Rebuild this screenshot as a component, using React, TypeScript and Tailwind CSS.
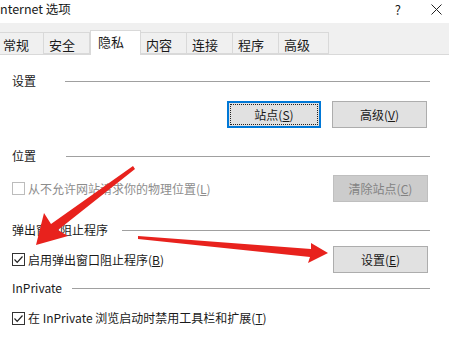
import type { ReactNode } from 'react';

const font = { fontFamily: '"Noto Sans CJK SC", "Noto Sans", sans-serif' };

function Tab({ label, active, w }: { label: string; active?: boolean; w: string }) {
  if (active) {
    return (
      <div className={`relative z-10 -mb-px flex h-[25px] ${w} items-start self-end border border-b-0 border-[#d9d9d9] bg-white pl-[7px] pt-[1px]`}>
        {label}
      </div>
    );
  }
  return (
    <div className={`flex h-[22px] ${w} items-start self-end border border-l-0 border-[#d9d9d9] bg-[#f0f0f0] pl-[5px] pt-[2px]`}>
      {label}
    </div>
  );
}

function GroupTitle({ label, gap, top }: { label: string; gap: number; top: string }) {
  return (
    <div className={`flex items-center ${top}`}>
      <span className="leading-4">{label}</span>
      <div className="h-px flex-1 bg-[#a0a0a0]" style={{ marginLeft: gap }} />
    </div>
  );
}

function Check({ checked, disabled }: { checked?: boolean; disabled?: boolean }) {
  return (
    <span
      className={`flex h-[13px] w-[13px] shrink-0 items-center justify-center border bg-white ${
        disabled ? 'border-[#bcbcbc]' : 'border-[#333]'
      }`}
    >
      {checked && (
        <svg width="11" height="11" viewBox="0 0 11 11">
          <path d="M1.5 5.5 L4.2 8.3 L9.5 2.5" fill="none" stroke="#222" strokeWidth="1.2" />
        </svg>
      )}
    </span>
  );
}

function Btn({
  children,
  focused,
  disabled,
  w = 'w-[95px]',
}: {
  children: ReactNode;
  focused?: boolean;
  disabled?: boolean;
  w?: string;
}) {
  if (focused) {
    return (
      <div className={`flex h-[27px] ${w} items-center justify-center border-2 border-[#0078d7] bg-[#e1e1e1] p-px`}>
        <div className="flex h-full w-full items-center justify-center border border-dotted border-[#222]">
          {children}
        </div>
      </div>
    );
  }
  return (
    <div
      className={`flex h-[27px] ${w} items-center justify-center border ${
        disabled ? 'border-[#bfbfbf] bg-[#cccccc] text-[#838383]' : 'border-[#adadad] bg-[#e1e1e1]'
      }`}
    >
      {children}
    </div>
  );
}

export default function App() {
  return (
    <div className="relative h-[351px] w-[449px] overflow-hidden bg-white text-[12px] text-[#1a1a1a]" style={font}>
      {/* title bar */}
      <div className="flex h-[23px] items-center justify-between pr-[6px] text-[12.5px]">
        <span className="-mt-[4px]">nternet 选项</span>
        <div className="-mt-[4px] mr-[1px] flex items-center gap-[30px]">
          <span className="text-[13px]">?</span>
          <svg width="11" height="11" viewBox="0 0 11 11">
            <path d="M0.5 0.5 L10.5 10.5 M10.5 0.5 L0.5 10.5" stroke="#222" strokeWidth="1" />
          </svg>
        </div>
      </div>

      {/* tabs */}
      <div className="flex h-[32px] items-end border-b border-[#d9d9d9] bg-[#f0f0f0] text-[13px]">
        <div className="flex h-[22px] w-[44px] items-start self-end border-r border-t border-[#d9d9d9] pl-[3px] pt-[2px]">
          常规
        </div>
        <Tab label="安全" w="w-[46px]" />
        <Tab label="隐私" active w="w-[51px]" />
        <Tab label="内容" w="w-[46px]" />
        <Tab label="连接" w="w-[46px]" />
        <Tab label="程序" w="w-[46px]" />
        <Tab label="高级" w="w-[50px]" />
      </div>

      {/* body */}
      <div className="flex flex-col pl-3 pr-[19px]">
        <GroupTitle label="设置" gap={29} top="mt-[18px]" />
        <div className="mt-[12px] flex justify-end gap-[11px] pr-[3px]">
          <Btn focused w="w-[94px]">
            <span>
              站点(<span className="underline">S</span>)
            </span>
          </Btn>
          <Btn>
            <span>
              高级(<span className="underline">V</span>)
            </span>
          </Btn>
        </div>

        <GroupTitle label="位置" gap={30} top="mt-[20px]" />
        <div className="mt-[11px] flex items-center justify-between pr-[2px]">
          <div className="flex items-center gap-[3px] text-[#8d8d8d]">
            <Check disabled />
            <span>
              从不允许网站请求你的物理位置(<span className="underline">L</span>)
            </span>
          </div>
          <Btn disabled>
            <span>
              清除站点(<span className="underline">C</span>)
            </span>
          </Btn>
        </div>

        <GroupTitle label="弹出窗口阻止程序" gap={14} top="mt-[20px]" />
        <div className="mt-[8px] flex items-center justify-between pr-[2px]">
          <div className="flex items-center gap-[3px]">
            <Check checked />
            <span>
              启用弹出窗口阻止程序(<span className="underline">B</span>)
            </span>
          </div>
          <Btn>
            <span>
              设置(<span className="underline">E</span>)
            </span>
          </Btn>
        </div>

        <GroupTitle label="InPrivate" gap={10} top="mt-[7px]" />
        <div className="mt-[13px] flex items-center gap-[3px]">
          <Check checked />
          <span>
            在 InPrivate 浏览启动时禁用工具栏和扩展(<span className="underline">T</span>)
          </span>
        </div>
      </div>

      {/* annotation arrows */}
      <svg className="pointer-events-none absolute left-0 top-0" width="449" height="351" viewBox="0 0 449 351">
        <polygon points="133,166 135,169 58,230 68,236 36,245 44,213 51,224" fill="#e8221d" />
        <polygon points="138,236 138,239 310,257 308,263 328,253 311,243 311,249" fill="#e8221d" />
      </svg>
    </div>
  );
}
